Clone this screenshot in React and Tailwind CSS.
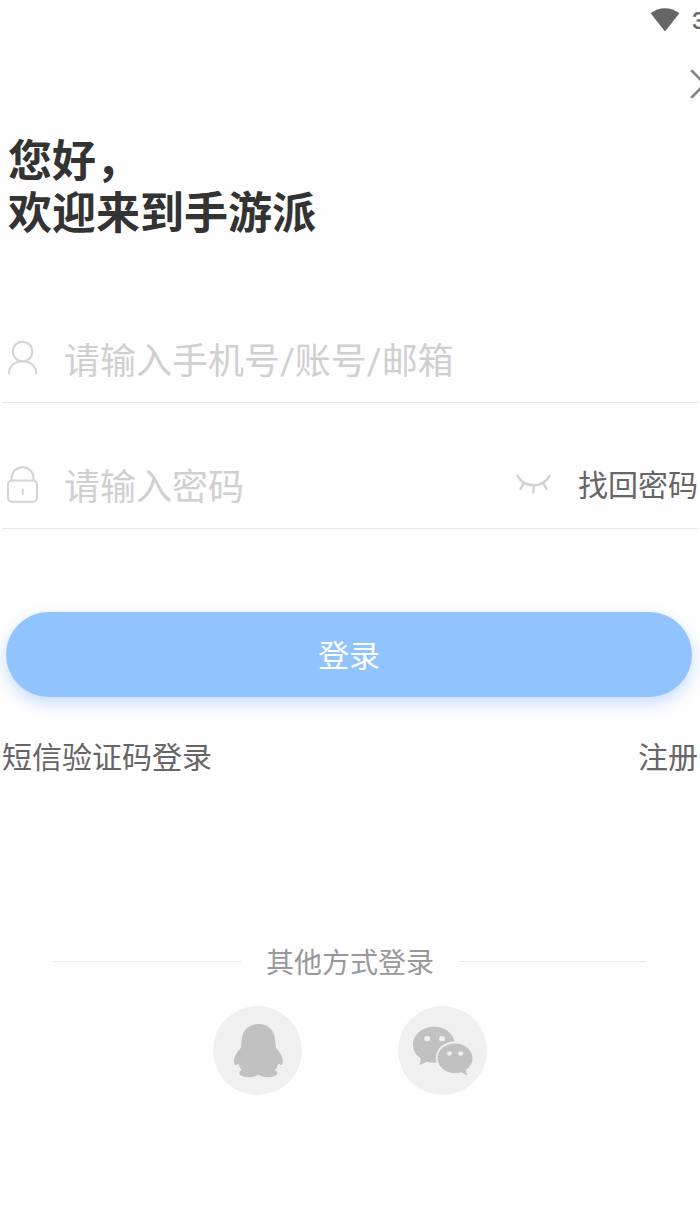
import React from "react";

const WifiIcon = () => (
  <svg className="h-6 w-[30px] shrink-0" viewBox="0 0 30 24" fill="#666666">
    <path d="M15 23.4 0.6 5.3C4.8 2 9.8 0.2 15 0.2s10.2 1.8 14.4 5.1L15 23.4Z" />
  </svg>
);

const CloseIcon = () => (
  <svg className="h-[30px] w-[30px] shrink-0" viewBox="0 0 30 30" fill="none" stroke="#888888" strokeWidth="2.8" strokeLinecap="round">
    <path d="M2 2 28 28M28 2 2 28" />
  </svg>
);

const UserIcon = () => (
  <svg className="h-9 w-8 shrink-0" viewBox="0 0 32 36" fill="none" stroke="#d4d4d4" strokeWidth="2" strokeLinecap="round">
    <circle cx="16.6" cy="11.5" r="9.8" />
    <path d="M3 33.3C3 26 9 21.2 16.6 21.2S30.2 26 30.2 33.3" />
  </svg>
);

const LockIcon = () => (
  <svg className="h-[38px] w-8 shrink-0" viewBox="0 0 32 38" fill="none" stroke="#d4d4d4" strokeWidth="2" strokeLinecap="round">
    <rect x="2" y="15.5" width="29" height="21.3" rx="4" />
    <path d="M5.6 15.5V13C5.6 6.5 10.4 2.2 16.5 2.2S27.4 6.5 27.4 13v2.5" />
    <path d="M16.8 24.8v4" />
  </svg>
);

const EyeClosedIcon = () => (
  <svg className="h-5 w-9 shrink-0" viewBox="0 0 36 20" fill="none" stroke="#d2d2d2" strokeWidth="2.4" strokeLinecap="round">
    <path d="M1.5 1.8C5 7.8 10.5 11.3 17.5 11.3S30 7.8 33.7 1.8" />
    <path d="M7.6 9.5 4.5 14.8M17.5 11.5v7M27.4 9.5l3.1 5.3" />
  </svg>
);

const QQIcon = () => (
  <svg className="h-[89px] w-[89px]" viewBox="0 0 89 89">
    <circle cx="44.5" cy="44.5" r="44.5" fill="#f0f0f0" />
    <g fill="#c1c1c1">
      <path d="M45.4 18C36 18 29.6 24 28.9 33L27.8 42C23.2 46.5 20.6 52 20.9 56.5c.2 1.6.9 2.5 1.8 2.5 1.1 0 1.8-.7 2.7-1.8.6 2.800 2 5.300 3.800 7.300L45.400 69l16.200-4.500c1.800-2 3.200-4.500 3.800-7.300.9 1.100 1.600 1.800 2.700 1.800.9 0 1.600-.9 1.800-2.500.3-4.500-2.300-10-6.900-14.500L61.900 33C61.200 24 54.800 18 45.400 18Z" />
      <ellipse cx="35.8" cy="67" rx="9.600" ry="4.300" />
      <ellipse cx="54.900" cy="67" rx="9.600" ry="4.300" />
    </g>
  </svg>
);

const WeChatIcon = () => (
  <svg className="h-[89px] w-[89px]" viewBox="0 0 89 89">
    <circle cx="44.5" cy="44.5" r="44.5" fill="#f0f0f0" />
    <path d="M36 20.8c-11.7 0-21 8-21 18 0 5.6 3 10.5 7.8 13.8L21.5 59.2l7.300-3.500c2.300.6 4.700 1 7.200 1 11.700 0 21-8 21-17.900s-9.300-18-21-18Z" fill="#c1c1c1" />
    <ellipse cx="57" cy="52.2" rx="19.2" ry="16.8" fill="#f0f0f0" />
    <path d="M57 37.4c-9.7 0-17.5 6.600-17.5 14.900S47.300 67.200 57 67.200c2.100 0 4.200-.3 6.100-.9l5.900 3-1.200-5.300c4.200-2.700 6.700-6.900 6.700-11.700 0-8.300-7.800-14.900-17.500-14.900Z" fill="#c1c1c1" />
    <g fill="#f0f0f0">
      <ellipse cx="29.2" cy="32.7" rx="3" ry="2.6" />
      <ellipse cx="44" cy="32.7" rx="3" ry="2.6" />
      <ellipse cx="51.5" cy="47.5" rx="2.5" ry="2.2" />
      <ellipse cx="62.7" cy="47.5" rx="2.5" ry="2.2" />
    </g>
  </svg>
);

const App = () => {
  return (
    <div className="h-[1230px] w-[700px] overflow-hidden bg-[#fefefe] font-['Roboto','Noto_Sans_CJK_SC',sans-serif] text-[#666666]">
      {/* Status bar */}
      <div className="flex h-10 items-center pl-[650px]">
        <WifiIcon />
        <span className="ml-3 pt-0.5 text-2xl font-medium">3</span>
      </div>

      <div className="flex h-[88px] items-center pl-[690px]">
        <CloseIcon />
      </div>

      <h1 className="mt-2 pl-2 text-[44px] leading-[52px] font-bold text-[#333333]">
        您好，
        <br />
        欢迎来到手游派
      </h1>

      {/* Login form */}
      <div className="mx-0.5 mt-[77px]">
        <div className="flex h-[86px] items-center border-b border-[#e8e8e8] pb-1 pl-1">
          <UserIcon />
          <span className="ml-[26px] pt-2 text-4xl text-[#d0d0d0]">请输入手机号/账号/邮箱</span>
        </div>
        <div className="mt-10 flex h-[86px] items-center border-b border-[#e8e8e8] pb-1 pl-1">
          <LockIcon />
          <span className="ml-[26px] pt-2 text-4xl text-[#d0d0d0]">请输入密码</span>
          <span className="ml-auto">
            <EyeClosedIcon />
          </span>
          <span className="ml-[26px] pt-1 text-[30px]">找回密码</span>
        </div>
      </div>

      <button className="mt-[83px] ml-1.5 flex h-[85px] w-[686px] items-center justify-center rounded-full bg-[#91c4ff] pt-[5px] text-[31px] text-white shadow-[0_6px_16px_rgba(130,180,255,0.45)]">
        登录
      </button>

      <div className="mx-0.5 mt-[38px] flex justify-between text-[30px] leading-[46px]">
        <span>短信验证码登录</span>
        <span>注册</span>
      </div>

      {/* Other sign-in methods */}
      <div className="mt-[159px] flex items-center justify-center px-[54px]">
        <span className="h-px flex-1 bg-[#e8e8e8]" />
        <span className="px-[25px] pt-[5px] text-[28px] leading-[37px] text-[#999999]">其他方式登录</span>
        <span className="h-px flex-1 bg-[#e8e8e8]" />
      </div>

      <div className="mt-6 flex justify-center gap-24">
        <QQIcon />
        <WeChatIcon />
      </div>
    </div>
  );
};

export default App;
